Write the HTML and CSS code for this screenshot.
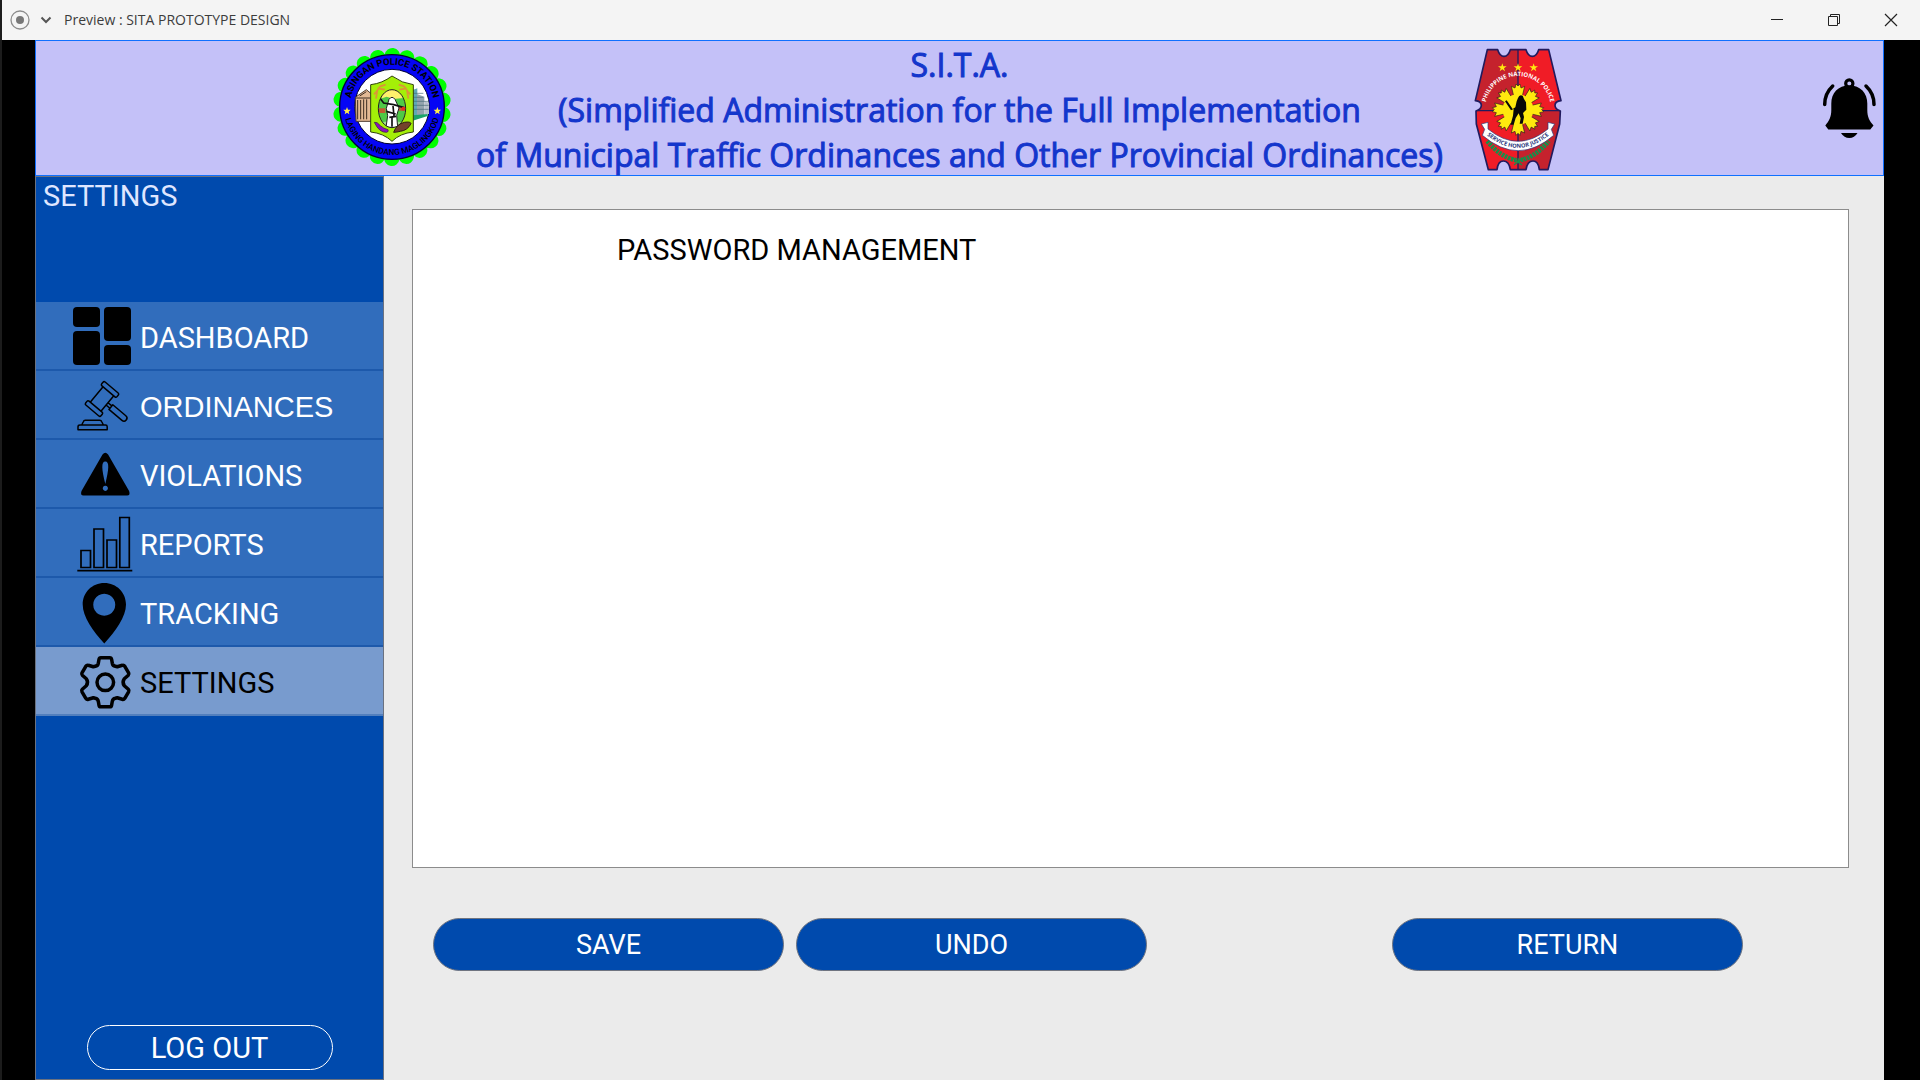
FILE: index.html
```html
<!DOCTYPE html>
<html lang="en">
<head>
<meta charset="utf-8">
<title>Preview : SITA PROTOTYPE DESIGN</title>
<link rel="stylesheet" href="styles.css">
</head>
<body>
<div class="window">
  <div class="titlebar">
    <svg class="record" viewBox="0 0 20 20" aria-hidden="true"><circle cx="10" cy="10" r="9" fill="none" stroke="#8c8c8c" stroke-width="1.3"/><circle cx="10" cy="10" r="4" fill="#777"/></svg>
    <button class="chevron" aria-label="Choose window"><svg viewBox="0 0 12 8"><path d="M1.500 1.500 6 6 10.500 1.500" fill="none" stroke="#555" stroke-width="2"/></svg></button>
    <span class="titlebar-text">Preview : SITA PROTOTYPE DESIGN</span>
    <div class="window-controls">
      <button aria-label="Minimize"><svg viewBox="0 0 14 14"><path d="M1 6.500h12" stroke="#222" fill="none"/></svg></button>
      <button aria-label="Restore"><svg viewBox="0 0 14 14"><path d="M1.500 3.500h9v9h-9zM3.500 3.500v-2h9v9h-2" stroke="#222" fill="none"/></svg></button>
      <button aria-label="Close"><svg viewBox="0 0 14 14"><path d="M1 1l12 12M13 1L1 13" stroke="#222" fill="none" stroke-width="1.200"/></svg></button>
    </div>
  </div>

  <div class="stage">
    <header class="banner">
      <svg class="seal" viewBox="21 21 360 360" role="img" aria-label="Asingan Police Station seal">
        <defs>
          <path id="seal-top" d="M75 200A126 126 0 0 1 327 200"/>
          <path id="seal-bottom" d="M56 200A145 145 0 0 0 346 200"/>
          <clipPath id="oval"><ellipse cx="201" cy="206" rx="41" ry="57"/></clipPath>
        </defs>
        <circle cx="201" cy="201" r="154" fill="none" stroke="#0f0" stroke-width="46" stroke-linecap="round" pathLength="22" stroke-dasharray="0 1" transform="rotate(8.180 201 201)"/>
        <circle cx="201" cy="201" r="157" fill="#0505f5" stroke="#020230" stroke-width="4"/>
        <circle cx="201" cy="200" r="112" fill="#fff" stroke="#020230" stroke-width="3"/>
        <path d="M91 172l33-23 24 20v75H93z" fill="#e2b995" stroke="#4d3b2e" stroke-width="3"/>
        <path d="M98 180v58M107 180v58M116 178v60M125 178v60M91 174h45M104 168l20-13" stroke="#3b2c22" stroke-width="3"/>
        <path d="M263 150l14-5v90h-14z" fill="#5fa8b5"/>
        <path d="M276 162l22 8v55h-22z" fill="#93a3ad"/><path d="M298 183l14 5v34h-14z" fill="#b9c1cb"/>
        <path d="M265 160h30M265 172h30M265 184h46M265 196h46M265 208h46" stroke="#466874" stroke-width="2"/>
        <path d="M263 226l45-4v6l-45 14z" fill="#1ba36a"/>
        <path d="M137 134q35-4 64-26 30 22 64 26v142q-40 4-64 28-25-24-64-28z" fill="#a4ef08" stroke="#31420b" stroke-width="3"/>
        <path d="M153 176l4-25 9-12 16-5M147 163l9-10M158 145l22 4M250 176l-4-25-9-12-16-5M256 163l-9-10M245 145l-22 4" fill="none" stroke="#dc9438" stroke-width="5"/>
        <g clip-path="url(#oval)">
          <path d="M155 145h95v125h-95z" fill="#fff16c"/>
          <path d="M155 180l30-10 20 7 45-4v95h-95z" fill="#4fc947"/>
          <path d="M155 205h26v14h-26zM220 200h24v12h-24z" fill="#c25a32"/>
          <path d="M158 250q42-12 86 0v20h-86z" fill="#a6d98c"/>
          <path d="M184 205l8-27q9-12 18 0l12 26-7 22 3 36h-35l5-35z" fill="#fff" stroke="#222" stroke-width="3"/>
          <path d="M164 173l12 16 30 5 31 9M184 214l28 8M204 198l3 30M193 232l20-3M201 232v28" fill="none" stroke="#111" stroke-width="5"/>
          <circle cx="235" cy="206" r="6" fill="#e52b20"/>
        </g>
        <ellipse cx="201" cy="206" rx="41" ry="57" fill="none" stroke="#222" stroke-width="3"/>
        <path d="M148 247q8-3 18 10 10 9 23 12 3 6-4 8-22 2-37-30z" fill="#8a10bf" stroke="#30203a" stroke-width="2"/>
        <path d="M206 277q8-24 32-30 19-3 20 4-10 20-32 23-12 3-20 3z" fill="#74432c" stroke="#30200f" stroke-width="3"/>
        <path id="seal-star" d="M66 201l3 8 8 0-6 6 2 8-7-5-7 5 2-8-6-6 8 0z" fill="#ffec4a"/>
        <use href="#seal-star" x="271"/>
        <text class="seal-text seal-text-top"><textPath href="#seal-top" startOffset="50%">ASINGAN POLICE STATION</textPath></text>
        <text class="seal-text seal-text-bottom"><textPath href="#seal-bottom" startOffset="50%">LAGING HANDANG MAGLINGKOD</textPath></text>
      </svg>

      <h1 class="banner-title">S.I.T.A.<br>(Simplified Administration for the Full Implementation<br>of Municipal Traffic Ordinances and Other Provincial Ordinances)</h1>

      <div class="banner-end">
        <svg class="pnp" viewBox="40 24 264 372" role="img" aria-label="Philippine National Police badge">
          <defs>
            <path id="shield" d="M80 29H111Q117 49 130 49 143 49 149 29H196Q202 49 215 49 228 49 234 29H264L301 182Q283 184 283 196 283 208 299 213L297 252 262 389H236Q233 363 217 363 200 363 196 389H149Q145 363 128 363 112 363 109 389H83L47 252 46 213Q62 208 62 196 62 184 44 182Z"/>
            <clipPath id="shield-clip"><use href="#shield"/></clipPath>
            <path id="pnp-arc" d="M75 190A99 99 0 0 1 270 190"/>
            <path id="pnp-ribbon" d="M76 283Q172 364 268 283"/>
          </defs>
          <g clip-path="url(#shield-clip)">
            <path d="M40 24h132v188H40z" fill="#c5222d"/><path d="M172 24h132v188H172z" fill="#f01c26"/>
            <path d="M40 212h132v184H40z" fill="#f01c26"/><path d="M172 212h132v184H172z" fill="#c5222d"/>
            <path d="M172 24v372M40 212h264" stroke="#211b5e" stroke-width="4"/>
          </g>
          <use href="#shield" fill="none" stroke="#211b5e" stroke-width="5" stroke-linejoin="round"/>
          <g fill="#ffe90e" stroke="#2a2218" stroke-width="2">
            <path id="ray" d="M160 172l-8-33 11 5 3-12 6 6 6-6 3 12 11-5-8 33z"/>
            <use href="#ray" transform="rotate(45 172 209)"/><use href="#ray" transform="rotate(90 172 209)"/><use href="#ray" transform="rotate(135 172 209)"/><use href="#ray" transform="rotate(180 172 209)"/><use href="#ray" transform="rotate(225 172 209)"/><use href="#ray" transform="rotate(270 172 209)"/><use href="#ray" transform="rotate(315 172 209)"/>
          </g>
          <circle cx="172" cy="209" r="46" fill="#ffe90e"/>
          <path d="M133 184l5-3 18 26 8-5 4-18 4-10q4-12 14-7l4 10 6 10 1 22-10 10 3 12-4 20h-9l3-16-6-15-9 14-6 20h-10l2-5 6-22 2-20-8 4z" fill="#080808"/>
          <path id="star" d="M125 70l3 9h10l-8 6 3 9-8-6-8 6 3-9-8-6h10z" fill="#ffe90e"/>
          <use href="#star" x="47"/><use href="#star" x="94"/>
          <path d="M80 303q40 50 92 59 52-9 92-59" fill="none" stroke="#14904a" stroke-width="14" stroke-dasharray="7 3"/>
          <path d="M160 375l32-24M184 375l-32-24" stroke="#14904a" stroke-width="4"/>
          <path d="M62 252l20-5v20q90 74 180 0v-20l20 5-10 16 7 18q-106 92-214 0l7-18z" fill="#fff" stroke="#26357c" stroke-width="2"/>
          <text class="pnp-text"><textPath href="#pnp-arc" startOffset="50%">PHILIPPINE NATIONAL POLICE</textPath></text>
          <text class="pnp-motto"><textPath href="#pnp-ribbon" startOffset="50%">SERVICE HONOR JUSTICE</textPath></text>
        </svg>
        <button class="bell" aria-label="Notifications">
          <svg viewBox="0 0 56 64"><path d="M28.300 9.500C17 9.500 10.300 17 10.300 27.500V34C10.300 41 8 45 4.300 49.500L7.300 53.500H49.300L52.500 49.500C48.500 45 46.300 41 46.300 34V27.500C46.300 17 39.500 9.500 28.300 9.500Z"/><circle cx="28.300" cy="7.500" r="3.600" fill="none" stroke="#000" stroke-width="3.200"/><path d="M20 57h16.500q-3 5-8.200 5T20 57z"/><path d="M11.700 10Q3.700 17.500 3.700 28.500M45 10Q53 17.500 53 28.500" fill="none" stroke="#000" stroke-width="3.500" stroke-linecap="round"/></svg>
        </button>
      </div>
    </header>

    <div class="body">
      <aside class="sidebar">
        <h2 class="sidebar-title">SETTINGS</h2>
        <nav class="nav">
          <a class="nav-item" href="#dashboard"><svg viewBox="0 0 64 68"><rect x="1" y="5" width="27" height="20" rx="4"/><rect x="32" y="5" width="27" height="34" rx="4"/><rect x="1" y="29" width="27" height="34" rx="4"/><rect x="32" y="43" width="27" height="20" rx="4"/></svg>DASHBOARD</a>
          <a class="nav-item nav-item-alt" href="#ordinances"><svg viewBox="0 0 64 68"><g fill="none" stroke="#000" stroke-width="1.500" stroke-linejoin="round"><g transform="rotate(40 30 28)"><rect x="20" y="13" width="20" height="5" rx="1.500"/><rect x="20" y="38" width="20" height="5" rx="1.500"/><path d="M23 18v20M37 18v20M37 27h5M37 30h5M42 25.500h17q3 0 3 3t-3 3H42z"/></g><path d="M6 58.700v-3q0-1.700 2-1.700h25.500q1.700 0 1.700 1.700v3zM9.700 54l1.500-3q.7-1.700 2-1.700h14.500q1.500 0 2.200 1.700l1.500 3"/></g></svg>ORDINANCES</a>
          <a class="nav-item" href="#violations"><svg viewBox="0 0 64 68"><path fill-rule="evenodd" d="M30.500 14.500q2.800-3.500 5.600 0l21 36.500q1.500 4.500-2 4.500H11.500q-3.500 0-2-4.500zM33.300 21.500c-4.300 0-3.600 8 0 22.500 3.600-14.500 4.300-22.500 0-22.500zM33.300 45.700a2.600 2.600 0 1 0 .1 0z"/></svg>VIOLATIONS</a>
          <a class="nav-item" href="#reports"><svg viewBox="0 0 64 68"><path fill="none" stroke="#000" stroke-width="1.700" d="M9 41.500h9.500v17H9zM22 20h9.500v38.500H22zM35 31h9.500v27.500H35zM47.800 8.500h9.500v50h-9.500zM5.300 61.700h55"/></svg>REPORTS</a>
          <a class="nav-item" href="#tracking"><svg viewBox="0 0 64 68"><path fill-rule="evenodd" d="M32.300 5C20 5 10.700 14.500 10.700 26.500 10.700 39 21 53 32.300 65.500 43.500 53 54 39 54 26.500 54 14.500 44.500 5 32.300 5zM32.300 15.700a11 11 0 1 1-.1 0z"/></svg>TRACKING</a>
          <a class="nav-item nav-item-active" href="#settings" aria-current="page"><svg viewBox="-33.300 -35.300 64 68"><g fill="none" stroke="#000" stroke-width="3.500" stroke-linejoin="round"><circle r="8.300"/><path d="M-4.500-24.500H4.500Q6-24.500 6.300-23L7-19Q7.500-16.500 10-16L12-15.500 17-17Q18.500-17.500 19.500-16L23.300-9.500Q24-8 23-7L19-3.500Q16.500 0 19 3.500L23 7Q24 8 23.300 9.500L19.500 16Q18.500 17.500 17 17L12 15.500 10 16Q7.500 16.500 7 19L6.300 23Q6 24.500 4.500 24.500H-4.500Q-6 24.500-6.300 23L-7 19Q-7.500 16.500-10 16L-12 15.500-17 17Q-18.500 17.500-19.500 16L-23.300 9.500Q-24 8-23 7L-19 3.500Q-16.500 0-19-3.500L-23-7Q-24-8-23.300-9.500L-19.500-16Q-18.500-17.500-17-17L-12-15.500-10-16Q-7.500-16.500-7-19L-6.300-23Q-6-24.500-4.500-24.500Z"/></g></svg>SETTINGS</a>
        </nav>
        <button class="logout">LOG OUT</button>
      </aside>

      <main class="content">
        <section class="panel">
          <h2 class="panel-title">PASSWORD MANAGEMENT</h2>
        </section>
        <div class="actions">
          <button class="action">SAVE</button>
          <button class="action">UNDO</button>
          <button class="action action-return">RETURN</button>
        </div>
      </main>
    </div>
  </div>
</div>
</body>
</html>
```
FILE: styles.css
```css
* { box-sizing: border-box; }

body {
  margin: 0;
  background: #000;
  font-family: Roboto, "Liberation Sans", sans-serif;
}

button {
  font: inherit;
  padding: 0;
  border: 0;
  background: none;
}

svg { display: block; }
h1, h2 { margin: 0; font-weight: 400; }

.window {
  display: flex;
  flex-direction: column;
  min-height: 100vh;
  border-left: 2px solid #1c1c1c;
}

/* Window title bar */
.titlebar {
  display: flex;
  align-items: center;
  height: 40px;
  padding-left: 8px;
  background: #f4f4f4;
  color: #3c3c3c;
}
.record { width: 20px; height: 20px; }
.chevron { margin: 0 12px 0 10px; }
.chevron svg { width: 12px; height: 8px; }
.titlebar-text {
  font: 14px/20px "Open Sans", "Noto Sans", sans-serif;
}
.window-controls { display: flex; margin-left: auto; padding-right: 1px; }
.window-controls button {
  display: grid;
  place-items: center;
  width: 57px;
  height: 40px;
}
.window-controls svg { width: 14px; height: 14px; }

/* Prototype canvas */
.stage {
  display: flex;
  flex: 1;
  flex-direction: column;
  margin: 0 36px 0 33px;
  background: #ebebeb;
}

.banner {
  display: grid;
  grid-template-columns: 1fr auto 1fr;
  align-items: center;
  height: 136px;
  border: 1px solid #1070ff;
  background: #c4c1f8;
}
.seal { width: 120px; height: 120px; margin: 0 24px 4px 0; justify-self: end; }
.seal-text { fill: #000; font-family: Roboto, sans-serif; text-anchor: middle; }
.seal-text-top { font-size: 28px; font-weight: 700; }
.seal-text-bottom { font-size: 25px; font-weight: 500; }
.banner-title {
  padding-top: 1px;
  color: #1436cc;
  font: 32px/45px "Open Sans", "Noto Sans", sans-serif;
  text-align: center;
  white-space: nowrap;
  -webkit-text-stroke: 1px #1436cc;
}
.banner-end {
  display: flex;
  align-items: center;
  justify-content: space-between;
  padding: 0 6px 0 31px;
}
.pnp { width: 88px; height: 124px; margin-top: 2px; }
.pnp-text { fill: #fff; font: 700 18px "Open Sans", sans-serif; text-anchor: middle; }
.pnp-motto { fill: #26357c; font: 700 17px "Open Sans", sans-serif; text-anchor: middle; }
.bell { margin-bottom: 2px; }
.bell svg { width: 56px; height: 64px; }

.body { display: flex; flex: 1; }

/* Sidebar */
.sidebar {
  display: flex;
  flex-direction: column;
  width: 349px;
  border: 1px solid #6b7280;
  background: #004aad;
  color: #fff;
}
.sidebar-title {
  height: 125px;
  padding: 2px 7px;
  color: #dfe6ff;
  font-size: 29px;
  line-height: 34px;
}
.nav-item {
  display: flex;
  align-items: flex-start;
  gap: 4px;
  height: 69px;
  padding-left: 36px;
  border-bottom: 2px solid #1d59ab;
  background: #316dbc;
  color: #fff;
  font-size: 29px;
  line-height: 72px;
  text-decoration: none;
}
.nav-item svg { width: 64px; height: 68px; fill: #000; }
.nav-item-alt { font-family: "Liberation Sans", Arial, sans-serif; }
.nav-item-active {
  border-bottom-color: #527fbd;
  background: #789bce;
  color: #000;
}
.logout {
  align-self: center;
  width: 246px;
  height: 45px;
  margin: auto 0 9px;
  border: 1px solid #fff;
  border-radius: 23px;
  color: #fff;
  font-size: 29px;
}

/* Main area */
.content {
  display: flex;
  flex: 1;
  flex-direction: column;
  padding: 33px 35px 109px 28px;
}
.panel {
  flex: 1;
  border: 1px solid #8c8c8c;
  background: #fff;
}
.panel-title {
  padding: 23px 204px;
  color: #000;
  font-size: 29px;
  line-height: 34px;
}
.actions {
  display: flex;
  gap: 12px;
  padding: 50px 106px 0 21px;
}
.action {
  width: 351px;
  height: 53px;
  border: 1px solid #6f7480;
  border-radius: 27px;
  background: #004aad;
  color: #fff;
  font-size: 27px;
}
.action-return { margin-left: auto; }
```
